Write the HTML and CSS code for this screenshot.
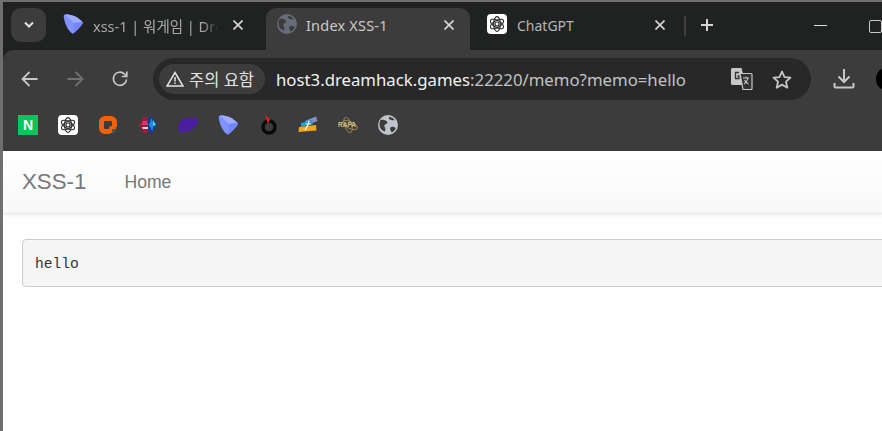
FILE: index.html
```html
<!DOCTYPE html>
<html lang="ko">
<head>
    <meta charset="UTF-8">
    <title>Index XSS-1</title>
    <link rel="stylesheet" href="styles.css">
</head>
<body>
    <svg class="defs" width="0" height="0">
        <defs>
            <symbol id="globe" viewBox="0 0 20 20">
                <circle cx="10" cy="10" r="10" fill="currentColor"/>
                <path d="M2.500 5c2.500-.5 5 .3 6.500 1.500 1 1-.3 2.800-1.800 3-1.300.3-1 2-.2 3 .8 1 .3 2.800-.3 4.200C3.800 15.500 1.500 13 1.500 10c0-2 .2-3.500 1-5zM17.800 13c-1.500-.8-3-1.500-4.500-1-1.500.5-1.500 2.500-.7 3.500l1 2c2-.7 3.500-2.500 4.200-4.500zM11 2c-.5 1-.2 1.800.8 2.500 1.500.8 3.500.8 4.800.4C15.300 3.200 13.300 2 11 2z" fill="var(--globe-cut)"/>
            </symbol>
            <symbol id="gem" viewBox="0 0 20 20">
                <path d="M2 .5C8 .2 14.500 2.500 19.500 8c.5.600.5 1.200.1 1.800-2.500 3.500-5.500 6.800-9 9.500-.6.500-1.300.4-1.800-.1C4.500 15.500 1.200 9 .7 2c0-.8.500-1.400 1.300-1.500z" fill="#7f92ff"/>
                <path d="M2 .5C8 .2 14.500 2.500 19.500 8L11 9z" fill="#9eacff"/>
                <path d="M11 9 19.500 8c.5.600.5 1.200.1 1.800-2.500 3.500-5.500 6.800-9 9.500z" fill="#7385fb"/>
            </symbol>
            <symbol id="gpt" viewBox="0 0 20 20">
                <rect width="20" height="20" rx="4" fill="#fff"/>
                <g fill="none" stroke="#2a2a2a" stroke-width="1.100">
                    <ellipse cx="10" cy="10" rx="3.400" ry="7.400"/>
                    <ellipse cx="10" cy="10" rx="3.400" ry="7.400" transform="rotate(60 10 10)"/>
                    <ellipse cx="10" cy="10" rx="3.400" ry="7.400" transform="rotate(120 10 10)"/>
                    <circle cx="10" cy="10" r="2"/>
                </g>
            </symbol>
        </defs>
    </svg>

    <div class="window">
        <div class="tabstrip">
            <button class="tab-search">
                <svg width="12" height="8" viewBox="0 0 12 8"><path d="M2 1.500 6 5.500 10 1.500" fill="none" stroke="#e3e3e3" stroke-width="2"/></svg>
            </button>
            <div class="tab tab-first">
                <svg class="favicon" width="20" height="20"><use href="#gem"/></svg>
                <span class="tab-title fade">xss-1 | 워게임 | Dreamhack</span>
                <svg class="tab-close" width="10" height="10" viewBox="0 0 10 10"><path d="M.5.500l9 9M9.500.500l-9 9" stroke="#d8d8d8" stroke-width="1.600"/></svg>
            </div>
            <div class="tab tab-active">
                <svg class="favicon globe-dim" width="20" height="20"><use href="#globe"/></svg>
                <span class="tab-title">Index XSS-1</span>
                <svg class="tab-close" width="10" height="10" viewBox="0 0 10 10"><path d="M.5.500l9 9M9.500.500l-9 9" stroke="#d8d8d8" stroke-width="1.600"/></svg>
            </div>
            <div class="tab tab-last">
                <svg class="favicon" width="20" height="20"><use href="#gpt"/></svg>
                <span class="tab-title">ChatGPT</span>
                <svg class="tab-close" width="10" height="10" viewBox="0 0 10 10"><path d="M.5.500l9 9M9.500.500l-9 9" stroke="#d8d8d8" stroke-width="1.600"/></svg>
            </div>
            <div class="tab-sep"></div>
            <svg class="new-tab" width="14" height="14" viewBox="0 0 14 14"><path d="M7 1v12M1 7h12" stroke="#d5d5d5" stroke-width="2"/></svg>
            <div class="win-min"></div>
            <div class="win-max"></div>
        </div>

        <div class="chrome">
            <div class="toolbar">
                <svg class="nav-icon" width="18" height="16" viewBox="0 0 18 16"><path d="M8.500 1 1.500 8l7 7M2 8h14.500" fill="none" stroke="#c7c7c7" stroke-width="1.800"/></svg>
                <svg class="nav-icon" width="18" height="16" viewBox="0 0 18 16"><path d="M9.500 1l7 7-7 7M16 8H1.500" fill="none" stroke="#717171" stroke-width="1.800"/></svg>
                <svg class="nav-icon" width="18" height="18" viewBox="0 0 18 18"><path d="M15.500 9.500A6.600 6.600 0 1 1 13.500 4L15.500 6M15.800 1.500v5h-5" fill="none" stroke="#c7c7c7" stroke-width="1.700"/></svg>
                <div class="omnibox">
                    <div class="chip">
                        <svg class="chip-icon" width="18" height="16" viewBox="0 0 18 16"><path d="M9 1.500 17 15H1z" fill="none" stroke="#e3e3e3" stroke-width="1.500"/><path d="M9 6v4.500M9 11.500v1.500" stroke="#e3e3e3" stroke-width="1.500"/></svg>
                        <span>주의 요함</span>
                    </div>
                    <div class="url"><span class="host">host3.dreamhack.games</span>:22220/memo?memo=hello</div>
                    <svg class="translate" width="22" height="22" viewBox="0 0 22 22">
                        <path d="M1.500 0h9L15 17H1.500A1.500 1.500 0 0 1 0 15.500v-14A1.500 1.500 0 0 1 1.500 0z" fill="#c7c7c7"/>
                        <path d="M8 4.500H4.500v6H8V8H6.500" fill="none" stroke="#333" stroke-width="1.300"/>
                        <path d="M9 5.500h11a1 1 0 0 1 1 1v14a1 1 0 0 1-1 1h-8z" fill="#333" stroke="#c7c7c7" stroke-width="1.200"/>
                        <path d="M12 10h6M15 8.500V10M17 10c-.5 2.500-2 4.500-4 6M13.500 12c.8 1.500 2 3 4 4" fill="none" stroke="#c7c7c7" stroke-width="1.100"/>
                    </svg>
                    <svg class="star" width="20" height="19" viewBox="0 0 20 19"><path d="M10 1.500l2.500 5.600 6 .6-4.500 4 1.300 6L10 14.600l-5.300 3.100 1.300-6-4.500-4 6-.6z" fill="none" stroke="#c7c7c7" stroke-width="1.800" stroke-linejoin="round"/></svg>
                </div>
                <svg class="download" width="22" height="21" viewBox="0 0 22 21"><path d="M11 1v13M5.500 8.500 11 14l5.500-5.500M1.500 15v3.500a1 1 0 0 0 1 1h17a1 1 0 0 0 1-1V15" fill="none" stroke="#c7c7c7" stroke-width="2"/></svg>
                <div class="avatar"></div>
            </div>

            <div class="bookmarks">
                <div class="bm bm-naver">N</div>
                <svg class="bm" width="20" height="20"><use href="#gpt"/></svg>
                <svg class="bm" width="20" height="20" viewBox="0 0 20 20">
                    <rect x="3.500" y="3.500" width="13" height="13" rx="3.500" fill="none" stroke="#ee620a" stroke-width="5"/>
                    <rect x="12" y="12" width="7" height="7" fill="#3c3c3c"/>
                    <path d="M11 11h7v2.500l-4 4.500h-3z" fill="#ee620a"/>
                    <path d="M14 14h5l-3.500 4.500H14z" fill="#55514e"/>
                    <rect x="7" y="7" width="5" height="5" fill="#3c3c3c"/>
                </svg>
                <svg class="bm" width="20" height="20" viewBox="0 0 20 20">
                    <path d="M5.500 2H10v16H5.500L1 10z" fill="#9c1c3e"/>
                    <path d="M10 2h4.500L19 10l-4.500 8H10z" fill="#123c8c"/>
                    <path d="M5 6h5L8 8h2v2H4z" fill="#e0357a"/>
                    <path d="M5 14h5v-2H4z" fill="#d8d8e0"/>
                    <path d="M13.500 3 11 10l3.500 6 1-6z" fill="#1a8cf0"/>
                    <path d="M15 5l3 5-3 1z" fill="#3fe6e0"/>
                </svg>
                <svg class="bm" width="20" height="20" viewBox="0 0 20 20"><path d="M0 11C1 6 6 2.500 12 2.500c4 0 8 .8 8 3 0 3.500-4 8-9 10.500-3 1.200-6.500 2-8.500 1.500C.5 16.500-.3 13.500 0 11z" fill="#4a1ea0"/></svg>
                <svg class="bm" width="20" height="20"><use href="#gem"/></svg>
                <svg class="bm" width="20" height="20" viewBox="0 0 20 20">
                    <circle cx="11" cy="12" r="6" fill="none" stroke="#0a0a0a" stroke-width="3.500"/>
                    <path d="M7 0 12 4 10 9z" fill="#e51c23"/>
                </svg>
                <svg class="bm" width="20" height="20" viewBox="0 0 20 20">
                    <path d="M7 6 18 1.500 19.500 6 9 10z" fill="#8b8fc8"/>
                    <path d="M3 8 14 5l1 4-12 3z" fill="#1c9fd6"/>
                    <path d="M1 12l17-2 .5 5.500L.5 17z" fill="#efa51e"/>
                    <path d="M11 6l-1 4-3 5M8 9h5" fill="none" stroke="#fff" stroke-width="1.200"/>
                </svg>
                <svg class="bm bm-rapa" width="20" height="20" viewBox="0 0 20 20">
                    <g fill="none" stroke="#a8945c" stroke-width=".8">
                        <ellipse cx="12" cy="10" rx="8" ry="3.500" transform="rotate(25 12 10)"/>
                        <ellipse cx="10" cy="10" rx="3.500" ry="8" transform="rotate(-20 10 10)"/>
                    </g>
                    <text x="0" y="12" class="rapa-text">RAPA</text>
                </svg>
                <svg class="bm globe-light" width="20" height="20"><use href="#globe"/></svg>
            </div>
        </div>

        <div class="page">
            <nav class="navbar">
                <a class="brand">XSS-1</a>
                <a class="nav-link">Home</a>
            </nav>
            <div class="container">
                <pre class="memo">hello</pre>
            </div>
        </div>
    </div>
</body>
</html>
```

FILE: styles.css
```css
/* General Styles */
html, body {
    margin: 0;
    height: 100%;
    overflow: hidden;
    background: #fff;
}

.defs {
    display: block;
    height: 0;
}

.window {
    width: 879px;
    height: 431px;
    display: flex;
    flex-direction: column;
    box-sizing: content-box;
    border-left: 3px solid #6f6f6f;
    font-family: "Noto Sans", "Noto Sans CJK KR", sans-serif;
    overflow: hidden;
}

/* Tab strip */
.tabstrip {
    height: 50px;
    box-sizing: border-box;
    margin-left: -3px;
    border-top: 2px solid #6f6f6f;
    padding-left: 11px;
    background: #202222;
    display: flex;
    align-items: flex-start;
    color: #c7c7c7;
}

.tab-search {
    width: 35px;
    height: 34px;
    margin-top: 6px;
    padding: 0;
    border: 0;
    border-radius: 10px;
    background: #3c3c3c;
    display: flex;
    align-items: center;
    justify-content: center;
}

.tab {
    height: 42px;
    margin-top: 6px;
    display: flex;
    align-items: center;
    box-sizing: border-box;
    font-size: 14px;
    padding-bottom: 8px;
}

.favicon {
    flex: none;
    margin-top: -2px;
}

.tab-first {
    width: 220px;
    padding-left: 17px;
}

.tab-active {
    width: 204px;
    padding-left: 11px;
    background: #3c3c3c;
    border-radius: 10px 10px 0 0;
}

.tab-last {
    width: 214px;
    padding-left: 17px;
}

.tab-title {
    margin-left: 10px;
    white-space: nowrap;
    overflow: hidden;
    flex: 1;
}

.tab-first .tab-title {
    margin-left: 10px;
    color: #a9a9a9;
    font-size: 14.500px;
}

.tab-active .tab-title {
    margin-left: 9px;
    color: #c9c9c9;
    font-size: 14.500px;
    letter-spacing: .2px;
}

.tab-last .tab-title {
    margin-left: 10px;
    color: #b5b5b5;
}

.fade {
    -webkit-mask-image: linear-gradient(to right, #000 88%, transparent 100%);
    mask-image: linear-gradient(to right, #000 88%, transparent 100%);
}

.tab-close {
    flex: none;
    margin: 0 16px 0 24px;
}

.tab-first .tab-close {
    margin: 0 23px 0 15px;
}

.tab-last .tab-close {
    margin-right: 19px;
}

.tab-sep {
    width: 2px;
    height: 20px;
    margin-top: 14px;
    background: #3f3f3f;
}

.new-tab {
    margin: 16px 0 0 14px;
}

.win-min {
    width: 13px;
    height: 1px;
    margin: 23px 0 0 100px;
    background: #e0e0e0;
}

.win-max {
    width: 11px;
    height: 11px;
    margin: 18px 0 0 42px;
    border: 1px solid #c8c8c8;
    border-radius: 2px;
}

/* Toolbar and bookmarks */
.chrome {
    background: #202222;
}

.toolbar {
    height: 50px;
    box-sizing: border-box;
    background: #3c3c3c;
    border-radius: 10px 0 0 0;
    padding: 8px 0 0 18px;
    display: flex;
    align-items: flex-start;
}

.nav-icon {
    flex: none;
    margin: 13px 27px 0 0;
}

.nav-icon + .nav-icon + .nav-icon {
    margin: 12px 24px 0 0;
}

.omnibox {
    flex: none;
    width: 658px;
    height: 42px;
    box-sizing: border-box;
    background: #282828;
    border-radius: 21px;
    padding: 0 19px 0 6px;
    display: flex;
    align-items: center;
}

.chip {
    flex: none;
    width: 106px;
    height: 30px;
    box-sizing: border-box;
    padding-left: 7px;
    background: #3c3c3c;
    border-radius: 15px;
    display: flex;
    align-items: center;
    gap: 5px;
    color: #e3e3e3;
    font-size: 16.500px;
    white-space: nowrap;
}

.chip-icon {
    flex: none;
}

.url {
    flex: 1;
    margin-left: 11px;
    font-size: 16.750px;
    color: #c2c2c2;
    white-space: nowrap;
    overflow: hidden;
}

.host {
    color: #f1f1f1;
}

.translate {
    flex: none;
    margin-right: 19px;
}

.star {
    flex: none;
}

.download {
    flex: none;
    margin: 10px 0 0 22px;
}

.avatar {
    flex: none;
    width: 24px;
    height: 24px;
    margin: 9px 0 0 21px;
    border-radius: 50%;
    background: #000;
}

.bookmarks {
    height: 51px;
    box-sizing: border-box;
    background: #3c3c3c;
    padding: 0 0 0 15px;
    display: flex;
    align-items: center;
    gap: 20px;
    color: #fff;
    --globe-cut: #3c3c3c;
}

.bm {
    flex: none;
    width: 20px;
    margin-bottom: 1px;
}

.bm-naver {
    height: 20px;
    background: #03c75a;
    color: #fff;
    font: bold 14px/20px "Liberation Sans", sans-serif;
    text-align: center;
}

.rapa-text {
    font: bold 6.500px "Liberation Sans", sans-serif;
    fill: #d8c282;
}

.globe-dim {
    color: #666c78;
    --globe-cut: #3c3c3c;
}

.globe-light {
    color: #c0c4cc;
}

/* Page */
.page {
    flex: 1;
    background: #fff;
    font-family: "Liberation Sans", Arial, sans-serif;
    width: 1000px;
}

.navbar {
    height: 63px;
    box-sizing: border-box;
    padding-left: 19px;
    display: flex;
    align-items: center;
    background: linear-gradient(to bottom, #fff 0, #f8f8f8 100%);
    border-bottom: 1px solid #e7e7e7;
    box-shadow: 0 1px 5px rgba(0, 0, 0, 0.07);
}

.brand {
    font-size: 22.300px;
    color: #777;
    margin-right: 38px;
}

.nav-link {
    font-size: 17.600px;
    color: #777;
}

.container {
    padding: 25px 0 0 19px;
}

.memo {
    margin: 0;
    height: 48px;
    box-sizing: border-box;
    padding: 15px 12px 0;
    background: #f5f5f5;
    border: 1px solid #ccc;
    border-radius: 4px;
    font-family: "Liberation Mono", monospace;
    font-size: 14.600px;
    line-height: 18px;
    color: #333;
}
```
